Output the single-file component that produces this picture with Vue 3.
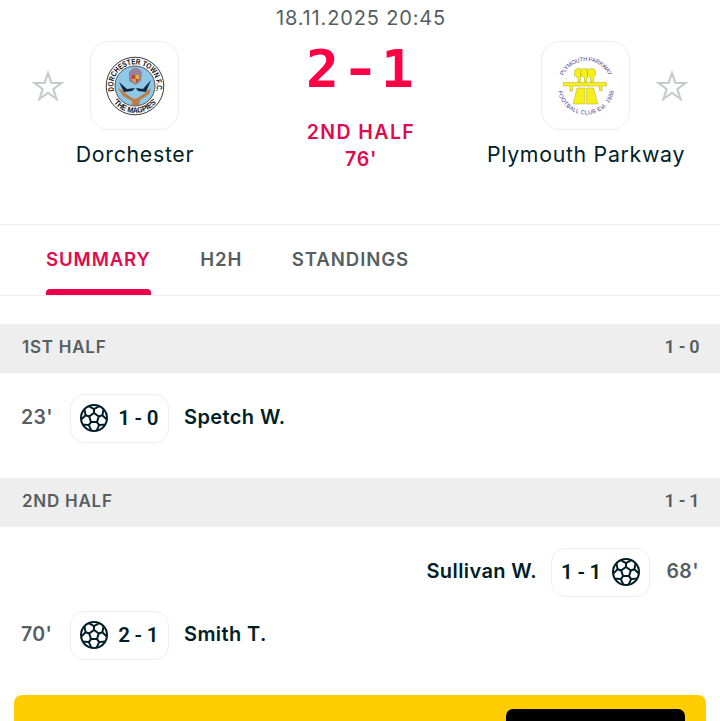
<template>
  <div class="match">
    <header class="header">
      <div class="team">
        <div class="teamTop">
          <svg class="star" viewBox="0 0 32 32"><path :d="starPath" /></svg>
          <div class="crest">
            <svg viewBox="0 0 60 60">
              <defs>
                <path id="dorTop" d="M10.5 39.3 A21.6 21.6 0 1 1 49.5 39.3" />
                <path id="dorBottom" d="M3 30 A27 27 0 0 0 57 30" />
              </defs>
              <circle cx="30" cy="30" r="28.8" fill="#fff" stroke="#222" stroke-width="0.9" />
              <circle cx="30" cy="30" r="20" fill="#8fc7e6" stroke="#333" stroke-width="0.8" />
              <path d="M13 32 L17 34 L20 37 L27 42 L30 43 L34 41 L40 37 L46 32 L44 38 L35 44 L34 49 H27 L27 45 L18 40Z" fill="#bd7d43" />
              <path d="M14 26 L22 33 L30 32 L27 35 L19 36Z M46 24 L38 33 L31 32 L33 35 L41 36Z" fill="#102540" />
              <path d="M24 16 L28 12 H33 L37 16 L36 25 L30.5 29 L24 25Z" fill="#96829c" />
              <path d="M27 19 H30.5 V23 H27Z M30.5 23 H34 L30.5 28Z" fill="#c64332" />
              <path d="M30.5 19 H34 V23 H30.5Z M27 23 H30.5 V28Z" fill="#d9b442" />
              <text class="dorText"><textPath href="#dorTop" startOffset="50%" textLength="78" lengthAdjust="spacingAndGlyphs">DORCHESTER TOWN F.C.</textPath></text>
              <text class="dorText"><textPath href="#dorBottom" startOffset="50%" textLength="52" lengthAdjust="spacingAndGlyphs">'THE MAGPIES'</textPath></text>
            </svg>
          </div>
        </div>
        <p class="name">Dorchester</p>
      </div>
      <div class="info">
        <p class="date">18.11.2025 20:45</p>
        <p class="score">
          <span class="digit">2</span><span class="dash">-</span><span class="digit">1</span>
        </p>
        <p class="stage">2ND HALF</p>
        <p class="stage minute">76'</p>
      </div>
      <div class="team away">
        <div class="teamTop">
          <div class="crest">
            <svg viewBox="0 0 60 60">
              <defs>
                <path id="plyTop" d="M5 30 A25 25 0 0 1 55 30" />
                <path id="plyBottom" d="M1.5 30 A28.5 28.5 0 0 0 58.5 30" />
              </defs>
              <g fill="#f6ef18" stroke="#aaa536" stroke-width="0.5">
                <path d="M18.5 15 L20.5 12.7 H25 V21 H24.5 V26 H22 V21.5 L18.5 20Z" />
                <path d="M25 15 L27 12.7 H31.5 V21 H31 V26 H28.5 V21.5 L25 20Z" />
                <path d="M31.5 15 L33.5 12.7 H38 L39.5 15 V19.5 L37.5 21.5 V26 H34.5 V21.5 L31.5 20Z" />
                <path d="M7.5 26.5 H50.5 V30 H46 V35 H43.5 V30 H16.5 V35 H14 V30 H7.5Z" />
                <path d="M21 32 H28.8 V48 H17.2Z M30.6 32 H37.5 L41.7 48 H30.6Z" />
              </g>
              <text class="plyText"><textPath href="#plyTop" startOffset="50%" textLength="57">PLYMOUTH PARKWAY</textPath></text>
              <text class="plyText"><textPath href="#plyBottom" startOffset="50%" textLength="79">FOOTBALL CLUB Est. 1988</textPath></text>
            </svg>
          </div>
          <svg class="star" viewBox="0 0 32 32"><path :d="starPath" /></svg>
        </div>
        <p class="name">Plymouth Parkway</p>
      </div>
    </header>

    <nav class="tabs">
      <a
        v-for="tab in tabs"
        :key="tab"
        :class="['tab', tab === activeTab ? 'active' : '']"
        @click="activeTab = tab"
        >{{ tab }}</a
      >
    </nav>

    <section v-for="half in halves" :key="half.title" class="half">
      <div class="halfTitle">
        <span>{{ half.title }}</span>
        <span class="halfScore">{{ half.score }}</span>
      </div>
      <div
        v-for="goal in half.goals"
        :key="goal.minute"
        :class="['goal', goal.away ? 'goalAway' : '']"
      >
        <span class="goalMinute">{{ goal.minute }}'</span>
        <span class="pill">
          <svg class="ball" viewBox="0 0 28 28">
            <circle cx="14" cy="14" r="13" />
            <path d="M14 9 L18.8 12.5 L17 18.1 H11 L9.2 12.5Z" />
            <path
              v-for="n in 5"
              :key="n"
              d="M14 9 V5.2 M8.7 2.2 L14 5.2 L19.3 2.2"
              :transform="`rotate(${n * 72} 14 14)`"
            />
          </svg>
          <span class="goalScore">{{ goal.score }}</span>
        </span>
        <span class="player">{{ goal.player }}</span>
      </div>
    </section>

    <div class="banner">
      <div class="bannerButton"></div>
    </div>
  </div>
</template>

<script setup>
// vue
import { ref } from "vue";

const tabs = ["SUMMARY", "H2H", "STANDINGS"];
const activeTab = ref("SUMMARY");

const starPath =
  "M16 3 L19.3 13 H29.6 L21.3 19.1 L24.5 29 L16 22.9 L7.5 29 L10.7 19.1 L2.4 13 H12.7 Z";

const halves = [
  {
    title: "1ST HALF",
    score: "1 - 0",
    goals: [{ minute: 23, score: "1 - 0", player: "Spetch W.", away: false }],
  },
  {
    title: "2ND HALF",
    score: "1 - 1",
    goals: [
      { minute: 68, score: "1 - 1", player: "Sullivan W.", away: true },
      { minute: 70, score: "2 - 1", player: "Smith T.", away: false },
    ],
  },
];
</script>

<style>
body {
  margin: 0;
  background: #fff;
}
</style>

<style scoped>
.match {
  height: 721px;
  overflow: hidden;
  font-family: Inter, "Liberation Sans", sans-serif;
  color: #001e28;
}
p {
  margin: 0;
  white-space: nowrap;
}
.header {
  display: grid;
  grid-template-columns: 269px 1fr 269px;
  height: 224px;
}
.team {
  padding-top: 41px;
}
.teamTop {
  display: grid;
  grid-template-columns: 1fr 89px 1fr;
  align-items: center;
}
.star {
  width: 32px;
  height: 32px;
  margin-left: 31.5px;
  fill: none;
  stroke: #c8cccc;
  stroke-width: 2.2;
}
.away .crest {
  grid-column: 2;
}
.away .star {
  margin-left: 25.5px;
}
.crest {
  box-sizing: border-box;
  height: 89px;
  border: 1px solid #eee;
  border-radius: 19px;
  display: flex;
  align-items: center;
  justify-content: center;
}
.crest svg {
  width: 60px;
  height: 60px;
}
.dorText {
  font: bold 8px "Liberation Sans", sans-serif;
  text-anchor: middle;
  fill: #111;
}
.plyText {
  font: 5.8px "Liberation Sans", sans-serif;
  text-anchor: middle;
  fill: #4b4688;
}
.name {
  margin-top: 10px;
  font-size: 21.3px;
  line-height: 28px;
  letter-spacing: 0.7px;
  text-align: center;
  text-indent: 1px;
}
.info {
  display: flex;
  flex-direction: column;
  align-items: center;
  color: #ff0046;
}
.date {
  margin-top: 5px;
  margin-right: -2px;
  font-size: 20px;
  line-height: 26px;
  letter-spacing: 0.85px;
  color: #555e61;
}
.score {
  display: flex;
  justify-content: space-between;
  width: 106px;
  margin-top: 9px;
  font: bold 51px "DejaVu Sans Mono", monospace;
  line-height: 60px;
}
.digit {
  transform: scaleX(1.07);
}
.dash {
  transform: scale(1.25, 0.9);
}
.stage {
  margin-top: 18px;
  margin-right: -2px;
  font-size: 19.5px;
  font-weight: 600;
  line-height: 28px;
  letter-spacing: 1.4px;
  color: #e00a4e;
}
.minute {
  margin-top: -1px;
  letter-spacing: 0.8px;
}
.tabs {
  box-sizing: border-box;
  height: 72px;
  padding-left: 46px;
  display: flex;
  gap: 49.5px;
  border-top: 1px solid #eee;
  border-bottom: 1px solid #eee;
  margin-bottom: 28px;
}
.tab {
  position: relative;
  font-size: 18.6px;
  font-weight: 600;
  line-height: 69px;
  letter-spacing: 0.9px;
  color: #555e61;
}
.active {
  color: #e00a4e;
}
.active::after {
  content: "";
  position: absolute;
  left: 0;
  right: 0;
  bottom: 0;
  height: 6px;
  border-radius: 4px 4px 0 0;
  background: #eb0049;
}
.half {
  margin-bottom: 35px;
}
.halfTitle {
  box-sizing: border-box;
  height: 49px;
  padding: 0 20px 3px 22px;
  margin-bottom: 21px;
  display: flex;
  align-items: center;
  justify-content: space-between;
  background: #eee;
  font-size: 17px;
  font-weight: 600;
  letter-spacing: 0.75px;
  color: #555e61;
}
.halfScore {
  padding-bottom: 2px;
  font-family: Roboto, sans-serif;
  font-size: 18px;
  letter-spacing: 0.5px;
  word-spacing: -1.5px;
}
.goal {
  display: flex;
  align-items: center;
  height: 49px;
  padding: 0 21px;
  margin-bottom: 14px;
  font-size: 20px;
  font-weight: 600;
  white-space: nowrap;
}
.goal:last-child {
  margin-bottom: 0;
}
.goalAway,
.goalAway .pill {
  flex-direction: row-reverse;
}
.goalMinute {
  width: 49px;
  padding-bottom: 3px;
  color: #555e61;
  font-size: 19.5px;
  letter-spacing: 0.4px;
}
.goalAway .goalMinute {
  text-align: right;
}
.pill {
  box-sizing: border-box;
  width: 99px;
  height: 49px;
  padding: 0 9px 2px;
  border: 1px solid #eee;
  border-radius: 14px;
  display: flex;
  align-items: center;
  justify-content: space-between;
}
.ball {
  width: 28px;
  height: 28px;
  fill: none;
  stroke: #001e28;
  stroke-width: 2;
}
.goalScore {
  font-family: Roboto, sans-serif;
  font-size: 20.5px;
  letter-spacing: 0.5px;
  word-spacing: -1.4px;
}
.player {
  margin: 0 14px 0 15px;
  padding-bottom: 3px;
  letter-spacing: 0.4px;
}
.banner {
  height: 60px;
  margin: 0 14px;
  padding: 14px 21px 0;
  display: flex;
  justify-content: flex-end;
  background: #ffcd00;
  border-radius: 8px;
}
.bannerButton {
  width: 179px;
  height: 40px;
  background: #000;
  border-radius: 7px;
}
</style>
